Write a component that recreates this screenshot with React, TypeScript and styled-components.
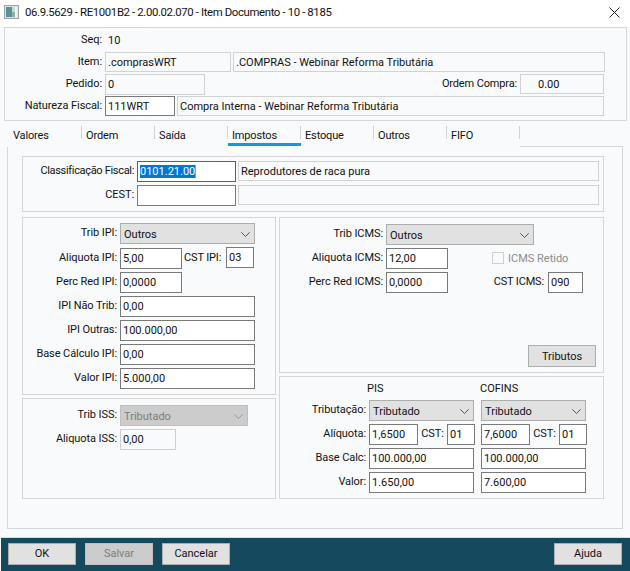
import React from "react";
import styled, { createGlobalStyle } from "styled-components";

const Global = createGlobalStyle`
  html, body { margin: 0; padding: 0; background: #f9fafc; }
  * { box-sizing: border-box; }
`;

const Window = styled.div`
  width: 630px;
  height: 571px;
  display: flex;
  flex-direction: column;
  background: #f9fafc;
  color: #111;
  font-family: Roboto, "Liberation Sans", sans-serif;
  font-size: 11px;
  overflow: hidden;
`;

const TitleBar = styled.div`
  height: 27px;
  flex: none;
  display: flex;
  align-items: center;
  padding: 0 10px 3px 4px;
  background: #fff;
  font-size: 11.4px;
  letter-spacing: -0.38px;
`;

const TitleText = styled.span`
  margin-left: 6px;
  flex: 1;
`;

const HeaderPanel = styled.div`
  flex: none;
  height: 94px;
  margin: 0 3px 0 4px;
  padding: 2px 0 0 0;
  border: 1px solid #d6d6d6;
  display: flex;
  flex-direction: column;
`;

const HeaderRow = styled.div`
  height: 22px;
  display: flex;
  align-items: flex-start;
`;

const Label = styled.label<{ $w: number }>`
  width: ${(p) => p.$w}px;
  flex: none;
  height: 20px;
  line-height: 19px;
  text-align: right;
  white-space: nowrap;
  margin-right: 3px;
  letter-spacing: -0.08px;
`;

const TightLabel = styled(Label)`
  letter-spacing: -0.32px;
`;

const Field = styled.div<{ $w: number; $kind?: "read" | "edit" | "plain" | "soft" | "focus" }>`
  width: ${(p) => p.$w}px;
  height: 21px;
  flex: none;
  padding-left: 2px;
  line-height: 19px;
  white-space: nowrap;
  overflow: hidden;
  background: ${(p) => (p.$kind === "edit" || p.$kind === "focus" ? "#fff" : "#f9fafc")};
  border: 1px solid
    ${(p) =>
      p.$kind === "edit"
        ? "#7a7a7a"
        : p.$kind === "focus"
          ? "#0078d7"
          : p.$kind === "plain"
            ? "#fcfcfd"
            : p.$kind === "soft"
              ? "#cfcfcf"
              : "#d2d2d2"};
`;

const ReadField = styled(Field)`
  height: 20px;
  margin-left: 2px;
`;

const FirstReadField = styled(ReadField)`
  margin-left: 0;
`;

const OrderField = styled(ReadField)`
  margin: 0 22px 0 0;
  padding-left: 17px;
`;

const RightLabel = styled.span`
  margin-left: auto;
  line-height: 19px;
  margin-right: 3px;
  letter-spacing: -0.15px;
`;

const Tabs = styled.div`
  flex: none;
  height: 26px;
  margin: 0 7px 0 7px;
  padding-left: 2px;
  display: flex;
  align-items: flex-start;
`;

const Tab = styled.div<{ $active?: boolean }>`
  width: 73px;
  height: 25px;
  padding: 8px 0 0 4px;
  position: relative;
  line-height: 14px;
  white-space: nowrap;
  letter-spacing: -0.15px;
  ${(p) => p.$active && "box-shadow: inset 0 -3px 0 #0b9be3;"}
  &::after {
    content: "";
    position: absolute;
    right: 0;
    top: 5px;
    height: 13px;
    width: 1px;
    background: #d2d2d2;
  }
`;

const TabFiller = styled.div`
  flex: 1;
  height: 26px;
  border-bottom: 1px solid #d6d6d6;
`;

const Content = styled.div`
  flex: none;
  width: 616px;
  height: 382px;
  margin-left: 7px;
  padding: 9px 0 0 14px;
  border: 1px solid #d6d6d6;
  border-top: none;
`;

const Panel = styled.div<{ $h: number; $w: number }>`
  width: ${(p) => p.$w}px;
  height: ${(p) => p.$h}px;
  flex: none;
  border: 1px solid #d6d6d6;
  display: flex;
  flex-direction: column;
`;

const FiscalPanel = styled(Panel)`
  padding-top: 4px;
  gap: 3px;
  margin-bottom: 5px;
`;

const Columns = styled.div`
  display: flex;
  gap: 3px;
`;

const Column = styled.div`
  display: flex;
  flex-direction: column;
  gap: 3px;
`;

const StackPanel = styled(Panel)<{ $top: number }>`
  padding-top: ${(p) => p.$top}px;
  gap: 3px;
`;

const Row = styled.div`
  display: flex;
  align-items: flex-start;
  flex: none;
`;

const WideRow = styled(Row)`
  margin-bottom: 1px;
`;

const SelectBox = styled.div<{ $w: number; $off?: boolean }>`
  width: ${(p) => p.$w}px;
  height: 21px;
  flex: none;
  display: flex;
  align-items: center;
  justify-content: space-between;
  padding: 1px 4px 0 3px;
  background: ${(p) => (p.$off ? "#cccccc" : "#e1e1e1")};
  border: 1px solid ${(p) => (p.$off ? "#bfbfbf" : "#adadad")};
  color: ${(p) => (p.$off ? "#7d7d7d" : "#111")};
`;

const Selected = styled.span`
  background: #0078d7;
  color: #fff;
  box-shadow: 1px 0 0 #f08a24;
`;

const CstLabel = styled.span`
  width: 44px;
  flex: none;
  padding-left: 2px;
  line-height: 19px;
  white-space: nowrap;
  letter-spacing: -0.15px;
`;

const RaisedField = styled(Field)`
  margin-top: -1px;
`;

const RetidoGroup = styled.div`
  margin-left: 44px;
  display: flex;
  align-items: center;
  height: 20px;
  gap: 4px;
  color: #8c8c8c;
`;

const CheckBox = styled.span`
  width: 12px;
  height: 12px;
  border: 1px solid #cfcfcf;
  background: #f9fafc;
`;

const CstIcmsLabel = styled.span`
  width: 96px;
  text-align: right;
  margin-right: 4px;
  line-height: 19px;
  white-space: nowrap;
  letter-spacing: -0.15px;
`;

const WinButton = styled.button<{ $off?: boolean }>`
  width: 68px;
  height: 22px;
  padding: 0;
  flex: none;
  font: inherit;
  background: ${(p) => (p.$off ? "#cccccc" : "#e1e1e1")};
  border: 1px solid ${(p) => (p.$off ? "#bfbfbf" : "#adadad")};
  color: ${(p) => (p.$off ? "#7d7d7d" : "#111")};
`;

const TributosButton = styled(WinButton)`
  margin: auto 7px 5px 0;
  align-self: flex-end;
`;

const PisHeader = styled.div`
  height: 20px;
  display: flex;
  align-items: center;
  padding: 2px 0 0 87px;
`;

const PisTitle = styled.span`
  width: 113px;
`;

const Pair = styled.div`
  width: 105px;
  flex: none;
  display: flex;
  align-items: flex-start;
  margin-right: 7px;
`;

const PairCst = styled.span`
  width: 29px;
  flex: none;
  text-align: center;
  line-height: 19px;
  letter-spacing: -0.15px;
`;

const Spacer = styled.div`
  flex: 1;
`;

const Gap = styled.div`
  flex: none;
  height: 8px;
`;

const Footer = styled.div`
  flex: 1;
  margin-left: 1px;
  display: flex;
  align-items: center;
  gap: 9px;
  padding: 0 8px 2px 7px;
  background: #154a5e;
  border-top: 1px solid #dcdcdc;
`;

const Chevron: React.FC<{ off?: boolean }> = ({ off }) => (
  <svg width="9" height="5" viewBox="0 0 9 5" fill="none">
    <path d="M0.3 0.3 L4.5 4.5 L8.7 0.3" stroke={off ? "#9a9a9a" : "#555"} strokeWidth="1" />
  </svg>
);

const AppIcon = () => (
  <svg width="15" height="14" viewBox="0 0 15 14">
    <rect x="0.5" y="0.5" width="14" height="13" fill="#dfe3e6" stroke="#9aa3a8" />
    <rect x="2" y="2" width="6" height="10" fill="#5d9098" />
    <rect x="8" y="2" width="3" height="5" fill="#c7dcc8" />
    <rect x="8" y="7" width="3" height="5" fill="#8fb39a" />
    <rect x="11" y="2" width="2" height="10" fill="#f2f4f5" />
  </svg>
);

const CloseIcon = () => (
  <svg width="11" height="11" viewBox="0 0 11 11">
    <path d="M0.5 0.5 L10.5 10.5 M10.5 0.5 L0.5 10.5" stroke="#222" strokeWidth="1" />
  </svg>
);

export default function App() {
  return (
    <Window>
      <Global />
      <TitleBar>
        <AppIcon />
        <TitleText>06.9.5629 - RE1001B2 - 2.00.02.070 - Item Documento - 10 - 8185</TitleText>
        <CloseIcon />
      </TitleBar>

      <HeaderPanel>
        <HeaderRow>
          <Label $w={97}>Seq:</Label>
          <Field $w={42} $kind="plain">10</Field>
        </HeaderRow>
        <HeaderRow>
          <Label $w={97}>Item:</Label>
          <FirstReadField $w={126}>.comprasWRT</FirstReadField>
          <ReadField $w={372}>.COMPRAS - Webinar Reforma Tributária</ReadField>
        </HeaderRow>
        <HeaderRow>
          <Label $w={97}>Pedido:</Label>
          <Field $w={100}>0</Field>
          <RightLabel>Ordem Compra:</RightLabel>
          <OrderField $w={84}>0.00</OrderField>
        </HeaderRow>
        <HeaderRow>
          <Label $w={97}>Natureza Fiscal:</Label>
          <FirstReadField $w={70} $kind="edit">111WRT</FirstReadField>
          <ReadField $w={427}>Compra Interna - Webinar Reforma Tributária</ReadField>
        </HeaderRow>
      </HeaderPanel>

      <Tabs>
        <Tab>Valores</Tab>
        <Tab>Ordem</Tab>
        <Tab>Saída</Tab>
        <Tab $active>Impostos</Tab>
        <Tab>Estoque</Tab>
        <Tab>Outros</Tab>
        <Tab>FIFO</Tab>
        <TabFiller />
      </Tabs>

      <Content>
        <FiscalPanel $w={582} $h={56}>
          <Row>
            <TightLabel $w={111}>Classificação Fiscal:</TightLabel>
            <Field $w={99} $kind="focus"><Selected>0101.21.00</Selected></Field>
            <ReadField $w={361}>Reprodutores de raca pura</ReadField>
          </Row>
          <Row>
            <Label $w={111}>CEST:</Label>
            <Field $w={99} $kind="edit" />
            <ReadField $w={361} />
          </Row>
        </FiscalPanel>

        <Columns>
          <Column>
            <StackPanel $w={254} $h={178} $top={5}>
              <WideRow>
                <Label $w={94}>Trib IPI:</Label>
                <SelectBox $w={135}>Outros<Chevron /></SelectBox>
              </WideRow>
              <Row>
                <Label $w={94}>Aliquota IPI:</Label>
                <Field $w={62} $kind="edit">5,00</Field>
                <CstLabel>CST IPI:</CstLabel>
                <RaisedField $w={28} $kind="edit">03</RaisedField>
              </Row>
              <Row>
                <Label $w={94}>Perc Red IPI:</Label>
                <Field $w={62} $kind="edit">0,0000</Field>
              </Row>
              <Row>
                <Label $w={94}>IPI Não Trib:</Label>
                <Field $w={135} $kind="edit">0,00</Field>
              </Row>
              <Row>
                <Label $w={94}>IPI Outras:</Label>
                <Field $w={135} $kind="edit">100.000,00</Field>
              </Row>
              <Row>
                <Label $w={94}>Base Cálculo IPI:</Label>
                <Field $w={135} $kind="edit">0,00</Field>
              </Row>
              <Row>
                <Label $w={94}>Valor IPI:</Label>
                <Field $w={135} $kind="edit">5.000,00</Field>
              </Row>
            </StackPanel>
            <StackPanel $w={254} $h={101} $top={6}>
              <Row>
                <Label $w={94}>Trib ISS:</Label>
                <SelectBox $w={128} $off>Tributado<Chevron off /></SelectBox>
              </Row>
              <Row>
                <Label $w={94}>Aliquota ISS:</Label>
                <Field $w={56} $kind="soft">0,00</Field>
              </Row>
            </StackPanel>
          </Column>

          <Column>
            <StackPanel $w={325} $h={156} $top={6}>
              <Row>
                <Label $w={103}>Trib ICMS:</Label>
                <SelectBox $w={148}>Outros<Chevron /></SelectBox>
              </Row>
              <Row>
                <Label $w={103}>Aliquota ICMS:</Label>
                <Field $w={62} $kind="edit">12,00</Field>
                <RetidoGroup><CheckBox />ICMS Retido</RetidoGroup>
              </Row>
              <Row>
                <Label $w={103}>Perc Red ICMS:</Label>
                <Field $w={62} $kind="edit">0,0000</Field>
                <CstIcmsLabel>CST ICMS:</CstIcmsLabel>
                <Field $w={35} $kind="edit">090</Field>
              </Row>
              <TributosButton>Tributos</TributosButton>
            </StackPanel>
            <StackPanel $w={325} $h={123} $top={0}>
              <PisHeader>
                <PisTitle>PIS</PisTitle>
                <span>COFINS</span>
              </PisHeader>
              <Row>
                <Label $w={86}>Tributação:</Label>
                <Pair><SelectBox $w={105}>Tributado<Chevron /></SelectBox></Pair>
                <Pair><SelectBox $w={105}>Tributado<Chevron /></SelectBox></Pair>
              </Row>
              <Row>
                <Label $w={86}>Alíquota:</Label>
                <Pair>
                  <Field $w={49} $kind="edit">1,6500</Field>
                  <PairCst>CST:</PairCst>
                  <Field $w={28} $kind="edit">01</Field>
                </Pair>
                <Pair>
                  <Field $w={49} $kind="edit">7,6000</Field>
                  <PairCst>CST:</PairCst>
                  <Field $w={28} $kind="edit">01</Field>
                </Pair>
              </Row>
              <Row>
                <Label $w={86}>Base Calc:</Label>
                <Pair><Field $w={105} $kind="edit">100.000,00</Field></Pair>
                <Pair><Field $w={105} $kind="edit">100.000,00</Field></Pair>
              </Row>
              <Row>
                <Label $w={86}>Valor:</Label>
                <Pair><Field $w={105} $kind="edit">1.650,00</Field></Pair>
                <Pair><Field $w={105} $kind="edit">7.600,00</Field></Pair>
              </Row>
            </StackPanel>
          </Column>
        </Columns>
      </Content>

      <Gap />
      <Footer>
        <WinButton>OK</WinButton>
        <WinButton $off>Salvar</WinButton>
        <WinButton>Cancelar</WinButton>
        <Spacer />
        <WinButton>Ajuda</WinButton>
      </Footer>
    </Window>
  );
}
